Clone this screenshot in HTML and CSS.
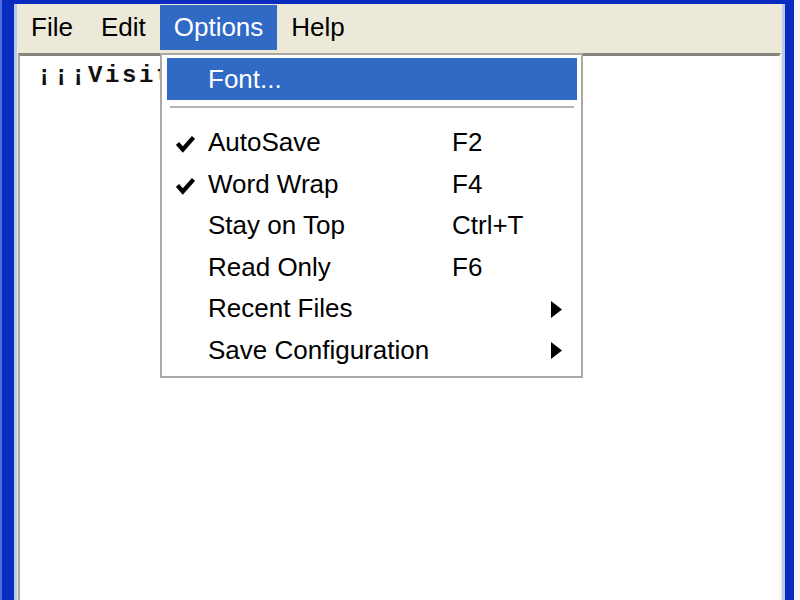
FILE: index.html
```html
<!DOCTYPE html>
<html>
<head>
<meta charset="utf-8">
<link rel="stylesheet" href="styles.css">
</head>
<body>
<div class="frame">
  <div class="client">
    <nav class="menubar">
      <span class="mb-item">File</span>
      <span class="mb-item">Edit</span>
      <span class="mb-item active">Options</span>
      <span class="mb-item">Help</span>
    </nav>
    <div class="editor">
      <div class="doc">¡¡¡Visit</div>
    </div>
  </div>
  <div class="menu">
    <div class="item hl"><span class="chk"></span><span class="label">Font...</span></div>
    <div class="sep"></div>
    <div class="item"><span class="chk"><svg width="19" height="18" viewBox="0 0 19 18"><polyline points="1.5,8.5 6.8,14.5 17.5,2.5" fill="none" stroke="#000" stroke-width="4.2"/></svg></span><span class="label">AutoSave</span><span class="key">F2</span></div>
    <div class="item"><span class="chk"><svg width="19" height="18" viewBox="0 0 19 18"><polyline points="1.5,8.5 6.8,14.5 17.5,2.5" fill="none" stroke="#000" stroke-width="4.2"/></svg></span><span class="label">Word Wrap</span><span class="key">F4</span></div>
    <div class="item"><span class="chk"></span><span class="label">Stay on Top</span><span class="key">Ctrl+T</span></div>
    <div class="item"><span class="chk"></span><span class="label">Read Only</span><span class="key">F6</span></div>
    <div class="item"><span class="chk"></span><span class="label">Recent Files</span><span class="key"></span><svg class="arrow" width="11" height="17" viewBox="0 0 11 17"><polygon points="0,0 11,8.5 0,17" fill="#000"/></svg></div>
    <div class="item"><span class="chk"></span><span class="label">Save Configuration</span><span class="key"></span><svg class="arrow" width="11" height="17" viewBox="0 0 11 17"><polygon points="0,0 11,8.5 0,17" fill="#000"/></svg></div>
  </div>
</div>
</body>
</html>
```

FILE: styles.css
```css
html, body {
  margin: 0;
  padding: 0;
  background: #f3f5fb;
}

.frame {
  position: relative;
  width: 794px;
  height: 600px;
  box-sizing: border-box;
  padding: 4px 9px 0 14px;
  background: linear-gradient(to right, #4a6fe0 0, #4a6fe0 2px, #0a2bbf 2px, #0a2bbf 100%);
  font-family: "Liberation Sans", Arial, sans-serif;
  font-size: 26px;
  color: #000;
  overflow: hidden;
}

.client {
  height: 100%;
  box-sizing: border-box;
  background: #ece9d8;
  border-left: 3px solid #b9c9ef;
  border-right: 3px solid #b9c9ef;
  display: flex;
  flex-direction: column;
}

.menubar {
  display: flex;
  height: 48px;
  box-sizing: border-box;
  padding-top: 1px;
}

.mb-item {
  padding: 0 14px;
  height: 45px;
  line-height: 45px;
}

.mb-item.active {
  background: #316ac5;
  color: #fff;
}

.editor {
  flex: 1;
  margin: 1px 1px 0 1px;
  background: #fff;
  border-top: 3px solid #86847b;
  border-left: 2px solid #a7a69f;
  border-right: 2px solid #f6f5f0;
}

.doc {
  padding: 5px 0 0 17px;
  font-family: "Liberation Mono", "Courier New", monospace;
  font-weight: bold;
  font-size: 24px;
  line-height: 30px;
  letter-spacing: 2.6px;
  color: #111;
}

.menu {
  position: absolute;
  left: 160px;
  top: 53px;
  width: 423px;
  box-sizing: border-box;
  border: 2px solid #aaa9a3;
  background: #fff;
  padding: 3px 4px 4px 5px;
}

.item {
  display: flex;
  align-items: center;
  height: 41.6px;
  line-height: 41.6px;
}

.item.hl {
  height: 42px;
  line-height: 42px;
  background: #316ac5;
  color: #fff;
}

.chk {
  width: 41px;
  flex: none;
  display: flex;
  align-items: center;
  height: 100%;
}

.chk svg {
  margin-left: 9px;
  margin-top: 3px;
}

.label {
  width: 244px;
  flex: none;
}

.key {
  flex: 1;
}

.arrow {
  margin-right: 15px;
  flex: none;
}

.sep {
  height: 2px;
  background: #b4b3ad;
  margin: 6px 3px 14px 3px;
}
```
